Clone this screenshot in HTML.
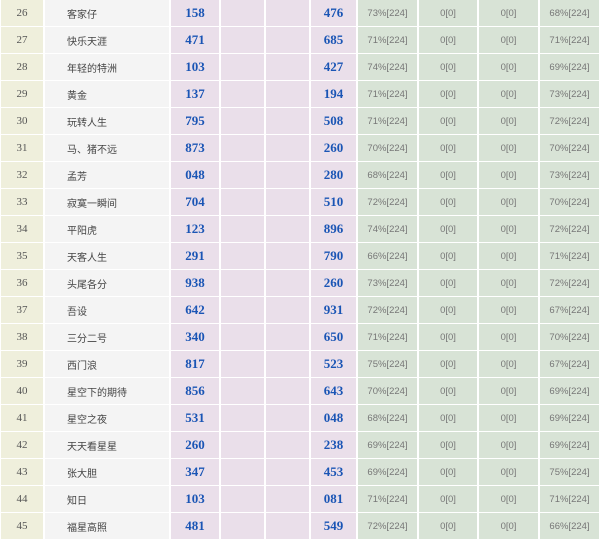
<!DOCTYPE html>
<html><head><meta charset="utf-8"><style>
body{margin:0;background:#fff;width:603px;height:542px;overflow:hidden}
table{border-collapse:separate;border-spacing:2px 1px;margin:-1px 0 0 -1px;table-layout:fixed}
td{height:26px;padding:0;font-family:"Liberation Sans","Noto Sans CJK SC",sans-serif;font-size:10px;color:#444}
td.a{background:#efefdc;text-align:center;font-size:11px;color:#555;font-family:"Liberation Serif",serif}
td.b{background:#f4f4f4}
td.b span{margin-left:22px}
td.p{background:#eadfea}
td.n{color:#1a55b5;font-weight:bold;font-size:13px;text-align:center;font-family:"Liberation Serif",serif}
td.g{background:#d8e3d6;text-align:center;font-size:9.5px;color:#777}
</style></head><body>
<table>
<colgroup><col style="width:42px"><col style="width:124px"><col style="width:48px"><col style="width:43px"><col style="width:43px"><col style="width:45px"><col style="width:59px"><col style="width:58px"><col style="width:59px"><col style="width:59px"></colgroup>
<tbody>
<tr><td class="a">26</td><td class="b"><span>客家仔</span></td><td class="p n">158</td><td class="p"></td><td class="p"></td><td class="p n">476</td><td class="g">73%[224]</td><td class="g">0[0]</td><td class="g">0[0]</td><td class="g">68%[224]</td></tr>
<tr><td class="a">27</td><td class="b"><span>快乐天涯</span></td><td class="p n">471</td><td class="p"></td><td class="p"></td><td class="p n">685</td><td class="g">71%[224]</td><td class="g">0[0]</td><td class="g">0[0]</td><td class="g">71%[224]</td></tr>
<tr><td class="a">28</td><td class="b"><span>年轻的特洲</span></td><td class="p n">103</td><td class="p"></td><td class="p"></td><td class="p n">427</td><td class="g">74%[224]</td><td class="g">0[0]</td><td class="g">0[0]</td><td class="g">69%[224]</td></tr>
<tr><td class="a">29</td><td class="b"><span>黄金</span></td><td class="p n">137</td><td class="p"></td><td class="p"></td><td class="p n">194</td><td class="g">71%[224]</td><td class="g">0[0]</td><td class="g">0[0]</td><td class="g">73%[224]</td></tr>
<tr><td class="a">30</td><td class="b"><span>玩转人生</span></td><td class="p n">795</td><td class="p"></td><td class="p"></td><td class="p n">508</td><td class="g">71%[224]</td><td class="g">0[0]</td><td class="g">0[0]</td><td class="g">72%[224]</td></tr>
<tr><td class="a">31</td><td class="b"><span>马、猪不远</span></td><td class="p n">873</td><td class="p"></td><td class="p"></td><td class="p n">260</td><td class="g">70%[224]</td><td class="g">0[0]</td><td class="g">0[0]</td><td class="g">70%[224]</td></tr>
<tr><td class="a">32</td><td class="b"><span>孟芳</span></td><td class="p n">048</td><td class="p"></td><td class="p"></td><td class="p n">280</td><td class="g">68%[224]</td><td class="g">0[0]</td><td class="g">0[0]</td><td class="g">73%[224]</td></tr>
<tr><td class="a">33</td><td class="b"><span>寂寞一瞬间</span></td><td class="p n">704</td><td class="p"></td><td class="p"></td><td class="p n">510</td><td class="g">72%[224]</td><td class="g">0[0]</td><td class="g">0[0]</td><td class="g">70%[224]</td></tr>
<tr><td class="a">34</td><td class="b"><span>平阳虎</span></td><td class="p n">123</td><td class="p"></td><td class="p"></td><td class="p n">896</td><td class="g">74%[224]</td><td class="g">0[0]</td><td class="g">0[0]</td><td class="g">72%[224]</td></tr>
<tr><td class="a">35</td><td class="b"><span>天客人生</span></td><td class="p n">291</td><td class="p"></td><td class="p"></td><td class="p n">790</td><td class="g">66%[224]</td><td class="g">0[0]</td><td class="g">0[0]</td><td class="g">71%[224]</td></tr>
<tr><td class="a">36</td><td class="b"><span>头尾各分</span></td><td class="p n">938</td><td class="p"></td><td class="p"></td><td class="p n">260</td><td class="g">73%[224]</td><td class="g">0[0]</td><td class="g">0[0]</td><td class="g">72%[224]</td></tr>
<tr><td class="a">37</td><td class="b"><span>吾设</span></td><td class="p n">642</td><td class="p"></td><td class="p"></td><td class="p n">931</td><td class="g">72%[224]</td><td class="g">0[0]</td><td class="g">0[0]</td><td class="g">67%[224]</td></tr>
<tr><td class="a">38</td><td class="b"><span>三分二号</span></td><td class="p n">340</td><td class="p"></td><td class="p"></td><td class="p n">650</td><td class="g">71%[224]</td><td class="g">0[0]</td><td class="g">0[0]</td><td class="g">70%[224]</td></tr>
<tr><td class="a">39</td><td class="b"><span>西门浪</span></td><td class="p n">817</td><td class="p"></td><td class="p"></td><td class="p n">523</td><td class="g">75%[224]</td><td class="g">0[0]</td><td class="g">0[0]</td><td class="g">67%[224]</td></tr>
<tr><td class="a">40</td><td class="b"><span>星空下的期待</span></td><td class="p n">856</td><td class="p"></td><td class="p"></td><td class="p n">643</td><td class="g">70%[224]</td><td class="g">0[0]</td><td class="g">0[0]</td><td class="g">69%[224]</td></tr>
<tr><td class="a">41</td><td class="b"><span>星空之夜</span></td><td class="p n">531</td><td class="p"></td><td class="p"></td><td class="p n">048</td><td class="g">68%[224]</td><td class="g">0[0]</td><td class="g">0[0]</td><td class="g">69%[224]</td></tr>
<tr><td class="a">42</td><td class="b"><span>天天看星星</span></td><td class="p n">260</td><td class="p"></td><td class="p"></td><td class="p n">238</td><td class="g">69%[224]</td><td class="g">0[0]</td><td class="g">0[0]</td><td class="g">69%[224]</td></tr>
<tr><td class="a">43</td><td class="b"><span>张大胆</span></td><td class="p n">347</td><td class="p"></td><td class="p"></td><td class="p n">453</td><td class="g">69%[224]</td><td class="g">0[0]</td><td class="g">0[0]</td><td class="g">75%[224]</td></tr>
<tr><td class="a">44</td><td class="b"><span>知日</span></td><td class="p n">103</td><td class="p"></td><td class="p"></td><td class="p n">081</td><td class="g">71%[224]</td><td class="g">0[0]</td><td class="g">0[0]</td><td class="g">71%[224]</td></tr>
<tr><td class="a">45</td><td class="b"><span>福星高照</span></td><td class="p n">481</td><td class="p"></td><td class="p"></td><td class="p n">549</td><td class="g">72%[224]</td><td class="g">0[0]</td><td class="g">0[0]</td><td class="g">66%[224]</td></tr>
</tbody></table>
</body></html>
